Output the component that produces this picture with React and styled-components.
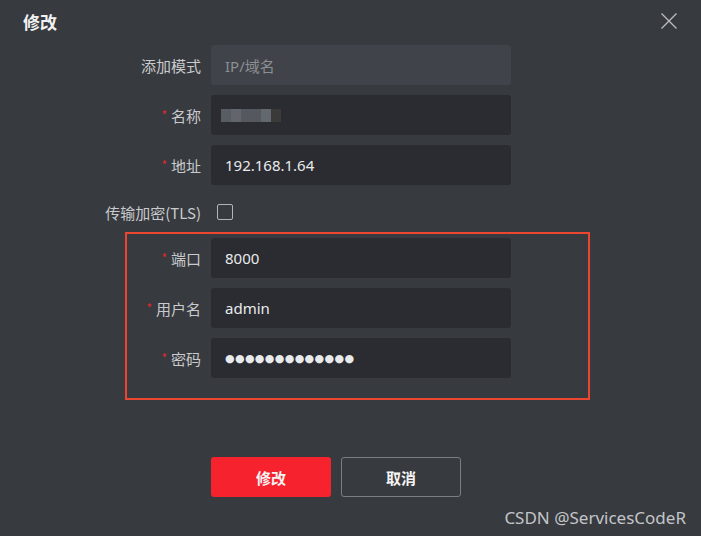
import React from "react";
import styled, { createGlobalStyle } from "styled-components";

const GlobalStyle = createGlobalStyle`
  html, body {
    margin: 0;
    padding: 0;
    background: #373a3f;
  }
  * {
    box-sizing: border-box;
  }
`;

const Dialog = styled.div`
  position: relative;
  width: 701px;
  height: 536px;
  background: #373a3f;
  font-family: "Noto Sans", "Noto Sans CJK SC", sans-serif;
  color: #c9cacd;
  overflow: hidden;
`;

const Header = styled.div`
  height: 45px;
  padding: 0 23px;
  display: flex;
  align-items: center;
  justify-content: space-between;
`;

const Title = styled.h2`
  margin: 0 0 3px;
  font-size: 17px;
  font-weight: bold;
  color: #f2f2f2;
  font-family: "Noto Sans CJK SC", sans-serif;
`;

const CloseButton = styled.button`
  width: 18px;
  height: 18px;
  margin: 0 0 4px;
  padding: 0;
  border: none;
  background: transparent;
  display: flex;
  cursor: pointer;
`;

const Form = styled.div`
  display: flex;
  flex-direction: column;
  gap: 10px;
`;

const Row = styled.div`
  display: grid;
  grid-template-columns: ${props => props.$labelWidth}px 300px;
  column-gap: 10px;
  align-items: center;
  height: ${props => props.$height || 40}px;
`;

const Label = styled.label`
  text-align: right;
  font-size: 15px;
  white-space: nowrap;
  font-family: "Noto Sans CJK SC", sans-serif;
`;

const Star = styled.span`
  color: #e0282e;
  font-size: 12px;
  margin-right: 4px;
  vertical-align: 2px;
`;

const Field = styled.div`
  height: 40px;
  border-radius: 3px;
  background: ${props => props.$disabled ? "#404349" : "#2a2c31"};
  color: ${props => props.$disabled ? "#8b8e93" : "#e9eaec"};
  font-size: 15px;
  padding: 0 14px;
  display: flex;
  align-items: center;
`;

const Blur = styled.div`
  display: flex;
  height: 13px;
  margin-left: -4px;
`;

const BlurCell = styled.span`
  width: ${props => props.$w}px;
  height: 100%;
  background: ${props => props.$c};
`;

const Dots = styled.span`
  font-family: "DejaVu Sans", sans-serif;
  font-size: 11px;
  letter-spacing: 0.35px;
  color: #e9eaec;
`;

const Checkbox = styled.span`
  width: 16px;
  height: 16px;
  margin-left: 6px;
  border: 1.5px solid #b4b5b8;
  border-radius: 2px;
`;

const HighlightBox = styled.div`
  margin: -7px 0 0 125px;
  width: 465px;
  padding: 4px 0 20px;
  border: 2px solid #ec4530;
  display: flex;
  flex-direction: column;
  gap: 10px;
`;

const Actions = styled.div`
  display: flex;
  gap: 10px;
  padding: 57px 0 0 211px;
`;

const Button = styled.button`
  width: 120px;
  height: 40px;
  border-radius: 3px;
  font-family: "Noto Sans CJK SC", sans-serif;
  font-size: 15px;
  font-weight: bold;
  color: #f4f4f4;
  cursor: pointer;
  background: ${props => props.$primary ? "#f6232e" : "transparent"};
  border: ${props => props.$primary ? "none" : "1.5px solid #7b7d81"};
`;

const Watermark = styled.div`
  position: absolute;
  right: 15px;
  bottom: 7px;
  font-family: "Noto Sans", sans-serif;
  font-size: 17px;
  color: #c4c5c8;
`;

const CloseIcon = () => (
    <svg width="18" height="18" viewBox="0 0 18 18">
        <path d="M1.5 1.5 L16.5 16.5 M16.5 1.5 L1.5 16.5" stroke="#b9babd" strokeWidth="1.4" fill="none"/>
    </svg>
);

const blurCells = [
    {w: 10, c: "#585c63"},
    {w: 10, c: "#62666c"},
    {w: 20, c: "#55585e"},
    {w: 10, c: "#63686e"},
    {w: 10, c: "#3b3a39"},
];

const App = () => {
    return (
        <Dialog>
            <GlobalStyle/>
            <Header>
                <Title>修改</Title>
                <CloseButton aria-label="close"><CloseIcon/></CloseButton>
            </Header>

            <Form>
                <Row $labelWidth={201}>
                    <Label>添加模式</Label>
                    <Field $disabled>IP/域名</Field>
                </Row>
                <Row $labelWidth={201}>
                    <Label><Star>*</Star>名称</Label>
                    <Field>
                        <Blur>
                            {blurCells.map((cell, i) => <BlurCell key={i} $w={cell.w} $c={cell.c}/>)}
                        </Blur>
                    </Field>
                </Row>
                <Row $labelWidth={201}>
                    <Label><Star>*</Star>地址</Label>
                    <Field>192.168.1.64</Field>
                </Row>
                <Row $labelWidth={201} $height={34}>
                    <Label>传输加密(TLS)</Label>
                    <Checkbox/>
                </Row>

                <HighlightBox>
                    <Row $labelWidth={74}>
                        <Label><Star>*</Star>端口</Label>
                        <Field>8000</Field>
                    </Row>
                    <Row $labelWidth={74}>
                        <Label><Star>*</Star>用户名</Label>
                        <Field>admin</Field>
                    </Row>
                    <Row $labelWidth={74}>
                        <Label><Star>*</Star>密码</Label>
                        <Field><Dots>●●●●●●●●●●●●●</Dots></Field>
                    </Row>
                </HighlightBox>
            </Form>

            <Actions>
                <Button $primary>修改</Button>
                <Button>取消</Button>
            </Actions>

            <Watermark>CSDN @ServicesCodeR</Watermark>
        </Dialog>
    );
};

export default App;
